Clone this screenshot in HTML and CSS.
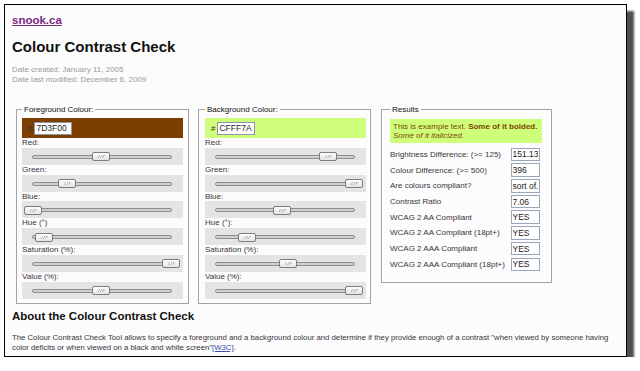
FILE: index.html
```html
<!DOCTYPE html>
<html>
<head>
    <meta charset="utf-8">
    <title>Colour Contrast Check</title>
    <link rel="stylesheet" href="styles.css">
</head>
<body>
    <div class="frame">
        <div class="site"><a href="#">snook.ca</a></div>
        <h1>Colour Contrast Check</h1>
        <p class="dates">Date created: January 11, 2005<br>Date last modified: December 6, 2009</p>

        <div class="tools">
            <fieldset class="picker">
                <legend>Foreground Colour:</legend>
                <div class="swatch fg-swatch">#<input class="hex" value="7D3F00"></div>
                <div class="label">Red:</div>
                <div class="slider"><div class="track"><span class="thumb" style="left: 49%"></span></div></div>
                <div class="label">Green:</div>
                <div class="slider"><div class="track"><span class="thumb" style="left: 24.7%"></span></div></div>
                <div class="label">Blue:</div>
                <div class="slider"><div class="track"><span class="thumb" style="left: 0%"></span></div></div>
                <div class="label">Hue (°)</div>
                <div class="slider"><div class="track"><span class="thumb" style="left: 8.3%"></span></div></div>
                <div class="label">Saturation (%):</div>
                <div class="slider"><div class="track"><span class="thumb" style="left: 100%"></span></div></div>
                <div class="label">Value (%):</div>
                <div class="slider"><div class="track"><span class="thumb" style="left: 49%"></span></div></div>
            </fieldset>

            <fieldset class="picker">
                <legend>Background Colour:</legend>
                <div class="swatch bg-swatch">#<input class="hex" value="CFFF7A"></div>
                <div class="label">Red:</div>
                <div class="slider"><div class="track"><span class="thumb" style="left: 81.2%"></span></div></div>
                <div class="label">Green:</div>
                <div class="slider"><div class="track"><span class="thumb" style="left: 100%"></span></div></div>
                <div class="label">Blue:</div>
                <div class="slider"><div class="track"><span class="thumb" style="left: 47.8%"></span></div></div>
                <div class="label">Hue (°):</div>
                <div class="slider"><div class="track"><span class="thumb" style="left: 22.7%"></span></div></div>
                <div class="label">Saturation (%):</div>
                <div class="slider"><div class="track"><span class="thumb" style="left: 52.2%"></span></div></div>
                <div class="label">Value (%):</div>
                <div class="slider"><div class="track"><span class="thumb" style="left: 100%"></span></div></div>
            </fieldset>

            <fieldset class="results">
                <legend>Results</legend>
                <div class="sample">This is example text. <b>Some of it bolded.</b><br><i>Some of it italicized.</i></div>
                <div class="row"><span>Brightness Difference: (&gt;= 125)</span><input class="out" value="151.13"></div>
                <div class="row"><span>Colour Difference: (&gt;= 500)</span><input class="out" value="396"></div>
                <div class="row"><span>Are colours compliant?</span><input class="out" value="sort of."></div>
                <div class="row"><span>Contrast Ratio</span><input class="out" value="7.06"></div>
                <div class="row"><span>WCAG 2 AA Compliant</span><input class="out" value="YES"></div>
                <div class="row"><span>WCAG 2 AA Compliant (18pt+)</span><input class="out" value="YES"></div>
                <div class="row"><span>WCAG 2 AAA Compliant</span><input class="out" value="YES"></div>
                <div class="row"><span>WCAG 2 AAA Compliant (18pt+)</span><input class="out" value="YES"></div>
            </fieldset>
        </div>

        <h2>About the Colour Contrast Check</h2>
        <p class="about">The Colour Contrast Check Tool allows to specify a foreground and a background colour and determine if they provide enough of a contrast "when viewed by someone having color deficits or when viewed on a black and white screen"<a href="#">[W3C]</a>.</p>
    </div>
</body>
</html>
```

FILE: styles.css
```css
* {
    box-sizing: border-box;
}

body {
    margin: 0;
    background: #fff;
    font-family: "Liberation Sans", Arial, sans-serif;
    color: #3b3340;
}

.frame {
    width: 623px;
    height: 353px;
    margin: 4px 0 0 4px;
    padding: 9px 6px 0 7px;
    border: 1px solid #000;
    background: #fcfcfc;
    box-shadow: 7px 7px 2px #4f4f4f;
    overflow: hidden;
}

.site {
    font-size: 11.5px;
    font-weight: bold;
    line-height: 13px;
}

.site a {
    color: #7b2a82;
}

h1 {
    margin: 11px 0 0;
    font-size: 15px;
    line-height: 17px;
    color: #111;
}

.dates {
    margin: 10px 0 0;
    font-size: 8px;
    line-height: 10px;
    color: #9a9a9a;
}

/* the three boxes */
.tools {
    display: flex;
    align-items: flex-start;
    margin: 19.5px 0 0 4px;
}

fieldset {
    margin: 0;
    min-width: 0;
    border: 1px solid #a3a3a3;
}

legend {
    padding: 0 2px;
    font-size: 8px;
    line-height: 10px;
    color: #111;
}

.picker {
    width: 173px;
    padding: 3.5px 5px 4px 5px;
}

.picker + .picker {
    margin-left: 9px;
    padding-left: 6px;
    padding-right: 4px;
}

.swatch {
    display: flex;
    align-items: center;
    height: 20px;
    padding-left: 6px;
    font-size: 8px;
    color: #333;
}

.fg-swatch {
    background: #7D3F00;
}

.bg-swatch {
    background: #CFFF7A;
}

.hex {
    width: 38px;
    height: 13px;
    margin-left: 2px;
    padding: 0 1px;
    border: 1px solid #8c96a8;
    background: #fff;
    font-family: "Liberation Sans", Arial, sans-serif;
    font-size: 8.5px;
    color: #222;
}

.label {
    height: 9.8px;
    font-size: 8px;
    line-height: 9.8px;
    white-space: nowrap;
}

.slider {
    height: 17px;
    padding-top: 7px;
    background: #e4e4e4;
}

.track {
    position: relative;
    height: 4px;
    margin: 0 11px 0 10px;
    border: 1px solid #8d8d8d;
    border-radius: 2px;
    background: #cfcfcf;
}

.thumb {
    position: absolute;
    top: -3.5px;
    width: 18px;
    height: 9px;
    margin-left: -9px;
    border: 1px solid #7d7d7d;
    border-radius: 2px;
    background: linear-gradient(#fdfdfd, #e4e4e4);
}

.thumb::after {
    content: "";
    position: absolute;
    left: 5px;
    top: 2px;
    width: 7px;
    height: 3px;
    background: repeating-linear-gradient(120deg, transparent 0 1px, #b8b8b8 1px 2px);
}

/* results box */
.results {
    width: 171px;
    margin-left: 10px;
    padding: 4.5px 9px 9.8px 8px;
}

.sample {
    height: 24px;
    padding: 3px 3px;
    background: #CFFF7A;
    color: #7D3F00;
    font-size: 8px;
    line-height: 9px;
    white-space: nowrap;
}

.sample + .row {
    margin-top: 3.6px;
}

.row {
    display: flex;
    align-items: center;
    justify-content: space-between;
    height: 15.7px;
    font-size: 8px;
    white-space: nowrap;
}

.out {
    width: 29px;
    height: 13.5px;
    margin-right: 2.5px;
    padding: 0 1px;
    border: 1px solid #9aa6bd;
    background: #fff;
    font-family: "Liberation Sans", Arial, sans-serif;
    font-size: 8.5px;
    color: #222;
}

h2 {
    margin: 6.5px 0 0;
    font-size: 11.5px;
    line-height: 13px;
    color: #111;
}

.about {
    margin: 10px 0 0;
    font-size: 7.75px;
    line-height: 9.5px;
}

.about a {
    color: #3a4bb0;
}
```
